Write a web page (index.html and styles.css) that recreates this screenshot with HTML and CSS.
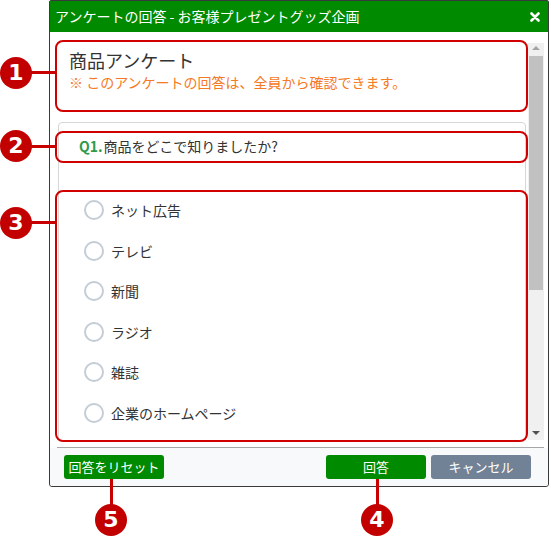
FILE: index.html
```html
<!DOCTYPE html>
<html lang="ja">
<head>
<meta charset="utf-8">
<title>アンケートの回答</title>
<link rel="stylesheet" href="styles.css">
</head>
<body>
<div class="dialog">
  <div class="titlebar">
    <span class="title">アンケートの回答 - お客様プレゼントグッズ企画</span>
    <svg class="close" width="10" height="10" viewBox="0 0 10 10"><path d="M1.5 1.5 L8.5 8.5 M8.5 1.5 L1.5 8.5" stroke="#fff" stroke-width="2.6" stroke-linecap="round"/></svg>
  </div>
  <div class="body">
    <div class="scrollwrap">
      <div class="content">
        <div class="head">
          <div class="survey-title">商品アンケート</div>
          <div class="notice">※ このアンケートの回答は、全員から確認できます。</div>
        </div>
        <div class="card">
          <div class="question"><span class="qno">Q1.</span>商品をどこで知りましたか?</div>
          <ul class="options">
            <li class="option"><span class="radio"></span><span class="label">ネット広告</span></li>
            <li class="option"><span class="radio"></span><span class="label">テレビ</span></li>
            <li class="option"><span class="radio"></span><span class="label">新聞</span></li>
            <li class="option"><span class="radio"></span><span class="label">ラジオ</span></li>
            <li class="option"><span class="radio"></span><span class="label">雑誌</span></li>
            <li class="option"><span class="radio"></span><span class="label">企業のホームページ</span></li>
          </ul>
        </div>
      </div>
      <div class="scrollbar">
        <div class="arrow up"></div>
        <div class="track"><div class="thumb"></div></div>
        <div class="arrow down"></div>
      </div>
    </div>
    <div class="sep"></div>
  </div>
  <div class="footer">
    <button class="btn btn-green btn-reset">回答をリセット</button>
    <div class="spacer"></div>
    <button class="btn btn-green">回答</button>
    <button class="btn btn-gray">キャンセル</button>
  </div>
</div>

<div class="annotations">
  <div class="abox box1"></div>
  <div class="abox box2"></div>
  <div class="abox box3"></div>
  <div class="hline l1"></div>
  <div class="hline l2"></div>
  <div class="hline l3"></div>
  <div class="vline l5"></div>
  <div class="vline l4"></div>
  <div class="badge b1">1</div>
  <div class="badge b2">2</div>
  <div class="badge b3">3</div>
  <div class="badge b5">5</div>
  <div class="badge b4">4</div>
</div>
</body>
</html>
```
FILE: styles.css
```css
html, body {
  margin: 0;
  padding: 0;
  background: #fff;
}
body {
  position: relative;
  width: 551px;
  height: 536px;
  overflow: hidden;
  font-family: "Noto Sans CJK JP", "Noto Sans", sans-serif;
  color: #333;
}
.dialog {
  margin-left: 49px;
  width: 500px;
  box-sizing: border-box;
  border: 1px solid #3a3a3a;
  border-radius: 2px 2px 3px 3px;
  background: #fff;
}
.titlebar {
  height: 31px;
  background: #008a00;
  color: #fff;
  display: flex;
  align-items: center;
  padding-left: 5px;
  padding-right: 8px;
}
.title {
  font-size: 14px;
  line-height: 31px;
  flex: 1;
  white-space: nowrap;
}
.close {
  display: block;
  margin-top: 1px;
}
.body {
  padding-top: 11px;
}
.scrollwrap {
  display: flex;
  height: 397px;
  padding-right: 4px;
}
.content {
  flex: 1;
  overflow: hidden;
  margin-top: -3px;
}
.head {
  padding: 8px 0 0 19px;
}
.survey-title {
  font-size: 18px;
  line-height: 24px;
}
.notice {
  font-size: 14px;
  line-height: 20px;
  color: #f57a25;
}
.card {
  margin: 30px 2px 0 8px;
  border: 1px solid #d6d6d6;
  border-radius: 4px;
  padding-top: 13px;
  height: 400px;
}
.question {
  font-size: 14px;
  line-height: 20px;
  padding-left: 20px;
}
.qno {
  color: #2f9a48;
  font-weight: bold;
  margin-right: 1px;
}
.options {
  list-style: none;
  margin: 0;
  padding: 33.7px 0 0 25px;
}
.option {
  height: 40.6px;
  display: flex;
  align-items: center;
}
.radio {
  width: 16px;
  height: 16px;
  border: 2px solid #c4cdd6;
  border-radius: 50%;
  background: #fff;
  flex: none;
}
.label {
  font-size: 14px;
  margin-left: 7px;
  color: #333;
}
.scrollbar {
  width: 16px;
  background: #f0f0f0;
  display: flex;
  flex-direction: column;
}
.arrow {
  height: 13px;
  position: relative;
}
.arrow.up::after,
.arrow.down::after {
  content: "";
  position: absolute;
  left: 4px;
  width: 0;
  height: 0;
  border-left: 4px solid transparent;
  border-right: 4px solid transparent;
}
.arrow.up::after {
  top: 3px;
  border-bottom: 4px solid #a3a3a3;
}
.arrow.down::after {
  bottom: 5px;
  border-top: 4px solid #505050;
}
.track {
  flex: 1;
  padding: 0 1px;
}
.thumb {
  height: 234px;
  background: #c1c1c1;
}
.sep {
  height: 7px;
  border-bottom: 1px solid #a6a6a6;
  margin: 0 4px 0 7px;
}
.footer {
  background: #f8f9fb;
  display: flex;
  align-items: center;
  padding: 7px 17px 7px 14px;
  gap: 5px;
  border-radius: 0 0 3px 3px;
}
.spacer {
  flex: 1;
}
.btn {
  width: 100px;
  height: 24px;
  border: none;
  border-radius: 3px;
  color: #fff;
  font-family: "Noto Sans CJK JP", "Noto Sans", sans-serif;
  font-size: 13px;
  line-height: 24px;
  padding: 0;
  cursor: pointer;
}
.btn-green {
  background: #008a00;
}
.btn-gray {
  background: #718296;
}

/* annotations layer */
.annotations {
  position: absolute;
  left: 0;
  top: 0;
  width: 551px;
  height: 536px;
  pointer-events: none;
}
.abox {
  position: absolute;
  box-sizing: border-box;
  border: 2.5px solid #d10000;
  border-radius: 8px;
}
.box1 { left: 55px; top: 40px; width: 473px; height: 72px; }
.box2 { left: 55px; top: 131px; width: 473px; height: 32px; }
.box3 { left: 55px; top: 190px; width: 473px; height: 252px; }
.hline {
  position: absolute;
  left: 28px;
  width: 29px;
  height: 3px;
  background: #c80000;
}
.l1 { top: 71px; }
.l2 { top: 145px; }
.l3 { top: 221px; }
.vline {
  position: absolute;
  top: 479px;
  width: 3px;
  height: 30px;
  background: #c80000;
}
.l5 { left: 110px; }
.l4 { left: 376px; }
.badge {
  position: absolute;
  width: 32px;
  height: 32px;
  border-radius: 50%;
  background: #c30000;
  color: #fff;
  font-family: "DejaVu Sans", "Liberation Sans", sans-serif;
  font-weight: bold;
  font-size: 22px;
  line-height: 32px;
  text-align: center;
}
.b1 { left: 0; top: 57px; }
.b2 { left: 0; top: 130px; }
.b3 { left: 0; top: 207px; }
.b5 { left: 95px; top: 504px; }
.b4 { left: 361px; top: 504px; }
```
